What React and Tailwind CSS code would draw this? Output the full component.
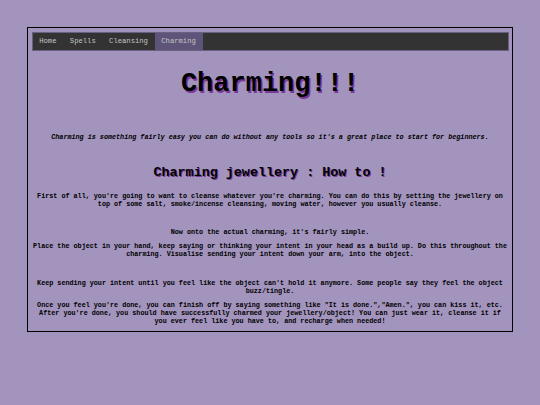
import React from 'react';

const tabs = ['Home', 'Spells', 'Cleansing', 'Charming'];

export default function App() {
  const mono = { fontFamily: '"Liberation Mono", "Courier New", monospace' };
  return (
    <div className="min-h-[405px] w-full bg-[#a294bd] pt-[27px]" style={mono}>
      <div className="mx-auto w-[486px] h-[305px] border-[1.5px] border-black px-[3.5px] pt-[3.5px] text-black">
        {/* Nav */}
        <div className="flex h-[19.5px] bg-[#333333] border border-[#6a6182]">
          {tabs.map((t) => (
            <div
              key={t}
              className={`flex items-center px-[6.7px] text-[7.2px] text-[#c4c4c4] ${t === 'Charming' ? 'bg-[#5e5479]' : ''}`}
            >
              {t}
            </div>
          ))}
        </div>

        <h1 className="mt-[18px] text-center text-[27px] leading-[30px] font-bold [text-shadow:1.5px_1.5px_0_#7a3898]">
          Charming!!!
        </h1>

        <p className="mt-[34px] text-center text-[6.75px] leading-[8px] font-bold italic">
          Charming is something fairly easy you can do without any tools so it's a great place to start for beginners.
        </p>

        <h2 className="mt-[24px] text-center text-[13.4px] leading-[16px] font-bold [text-shadow:1px_1px_0_#7a3898]">
          Charming jewellery : How to !
        </h2>

        <div className="text-center text-[6.75px] leading-[8px] font-bold">
          <p className="mt-[11px]">
            First of all, you're going to want to cleanse whatever you're charming. You can do this by setting the jewellery on top of some salt, smoke/incense cleansing, moving water, however you usually cleanse.
          </p>
          <p className="mt-[20px]">Now onto the actual charming, it's fairly simple.</p>
          <p className="mt-[6px]">
            Place the object in your hand, keep saying or thinking your intent in your head as a build up. Do this throughout the charming. Visualise sending your intent down your arm, into the object.
          </p>
          <p className="mt-[21px]">
            Keep sending your intent until you feel like the object can't hold it anymore. Some people say they feel the object buzz/tingle.
          </p>
          <p className="mt-[6px]">
            Once you feel you're done, you can finish off by saying something like "It is done.","Amen.", you can kiss it, etc. After you're done, you should have successfully charmed your jewellery/object! You can just wear it, cleanse it if you ever feel like you have to, and recharge when needed!
          </p>
        </div>
      </div>
    </div>
  );
}
